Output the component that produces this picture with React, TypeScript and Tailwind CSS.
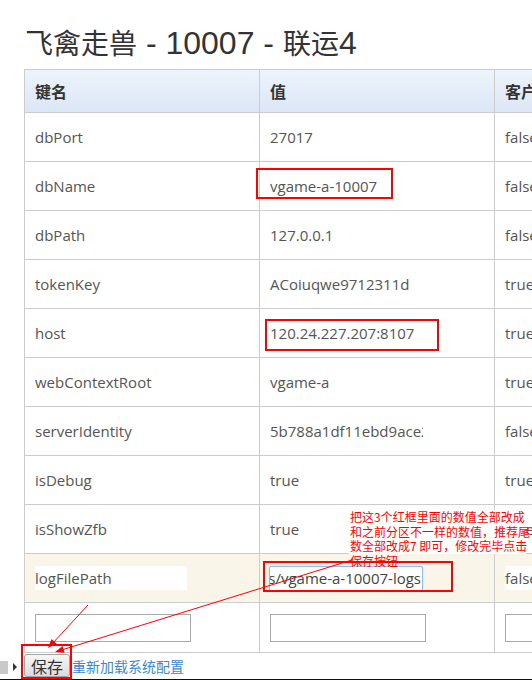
import React from "react";

const rows: [string, string, string][] = [
  ["dbPort", "27017", "false"],
  ["dbName", "vgame-a-10007", "false"],
  ["dbPath", "127.0.0.1", "false"],
  ["tokenKey", "ACoiuqwe9712311d", "true"],
  ["host", "120.24.227.207:8107", "true"],
  ["webContextRoot", "vgame-a", "true"],
  ["serverIdentity", "5b788a1df11ebd9ace2f0c", "false"],
  ["isDebug", "true", "true"],
  ["isShowZfb", "true", "true"],
];

const cellFont = "font-['Open_Sans','Noto_Sans_CJK_SC',sans-serif] text-[15px] text-[#555]";

function Cell({ children, className = "" }: { children?: React.ReactNode; className?: string }) {
  return (
    <div className={`w-[235px] shrink-0 border-r border-[#cccccc] pl-[10px] flex items-center ${className}`}>
      {children}
    </div>
  );
}

export default function App() {
  return (
    <div className="relative w-[532px] h-[680px] overflow-hidden bg-white">
      {/* Title */}
      <div className="h-[69px] pt-[24px] pl-[25px] whitespace-nowrap text-[#333] font-['Liberation_Sans','Noto_Sans_CJK_SC',sans-serif] text-[32px] leading-[36px]">
        <span className="text-[28px] font-['Noto_Sans_CJK_SC',sans-serif]">飞禽走兽</span>
        {" - 10007 - "}
        <span className="text-[28px] font-['Noto_Sans_CJK_SC',sans-serif]">联运</span>4
      </div>

      {/* Table */}
      <div className="ml-[24px] w-[706px] border-l border-t border-[#cccccc]">
        <div className="flex h-[43px] border-b border-[#cccccc] bg-linear-to-b from-[#edf4fc] to-[#dbe6f6] font-['Noto_Sans_CJK_SC',sans-serif] text-[16px] font-bold text-[#333]">
          <Cell>键名</Cell>
          <Cell>值</Cell>
          <Cell>客户端</Cell>
        </div>
        {rows.map(([k, v, c]) => (
          <div key={k} className={`flex h-[49px] border-b border-[#cccccc] ${cellFont}`}>
            <Cell>
              <div className="w-[153px] overflow-hidden whitespace-nowrap">{k}</div>
            </Cell>
            <Cell>
              <div className="w-[153px] overflow-hidden whitespace-nowrap">{v}</div>
            </Cell>
            <Cell>{c}</Cell>
          </div>
        ))}
        {/* highlighted row */}
        <div className={`flex h-[49px] border-b border-[#cccccc] bg-[#f9f6e9] ${cellFont}`}>
          <Cell>
            <div className="w-[152px] h-[24px] bg-white flex items-center whitespace-nowrap overflow-hidden">logFilePath</div>
          </Cell>
          <Cell>
            <div className="-ml-[1px] w-[154px] h-[25px] bg-white border border-[#91baee] rounded-[2px] shadow-[0_0_2px_#b8d4f5] overflow-hidden flex justify-end items-center whitespace-nowrap">
              <span className="pr-[1px] text-[#444]">/data/vgame/logs/vgame-a-10007-logs</span>
            </div>
          </Cell>
          <Cell>
            <div className="w-[152px] h-[24px] bg-white flex items-center">false</div>
          </Cell>
        </div>
        {/* empty input row */}
        <div className="flex h-[50px] border-b border-[#cccccc]">
          <Cell>
            <div className="w-[156px] h-[28px] border border-[#a9a9a9] bg-white" />
          </Cell>
          <Cell>
            <div className="w-[156px] h-[28px] border border-[#a9a9a9] bg-white" />
          </Cell>
          <Cell>
            <div className="w-[156px] h-[28px] border border-[#a9a9a9] bg-white" />
          </Cell>
        </div>
      </div>

      {/* Footer */}
      <div className="flex items-center h-[26px]">
        <div className="w-[8px] h-[13px] bg-[#c9c9c9] mt-[2px]" />
        <div className="ml-[5px] mt-[2px] w-0 h-0 border-y-[4px] border-y-transparent border-l-[4px] border-l-[#333]" />
        <button className="ml-[7px] -mt-[1px] w-[46px] h-[23px] border border-[#a3a3a3] rounded-[3px] bg-linear-to-b from-[#f7f7f7] to-[#dcdcdc] text-[16px] leading-[20px] text-[#333] font-['Noto_Sans_CJK_SC',sans-serif]">
          保存
        </button>
        <span className="ml-[2px] text-[14px] text-[#3a89cf] font-['Noto_Sans_CJK_SC',sans-serif]">重新加载系统配置</span>
      </div>
      <div className="h-[1px] bg-[#111]" />

      {/* Annotation text */}
      <div className="absolute left-[349px] top-[510px] text-[12px] leading-[14.5px] text-[#ff0000] font-['Noto_Sans_CJK_SC',sans-serif] whitespace-nowrap">
        <div className="bg-white w-[177px] pl-[1px]">
          <div>把这3个红框里面的数值全部改成</div>
          <div>和之前分区不一样的数值，推荐尾</div>
          <div>数全部改成7 即可，修改完毕点击</div>
        </div>
        <div className="pl-[1px]">保存按钮</div>
      </div>

      {/* Red boxes */}
      <div className="absolute left-[256px] top-[168px] w-[137px] h-[31px] border-2 border-[#ff0000]" />
      <div className="absolute left-[265px] top-[319px] w-[174px] h-[32px] border-2 border-[#ff0000]" />
      <div className="absolute left-[263px] top-[561px] w-[190px] h-[31px] border-2 border-[#ff0000]" />
      <div className="absolute left-[21px] top-[644px] w-[51px] h-[35px] border-2 border-[#ff0000]" />

      {/* Arrows */}
      <svg className="absolute left-0 top-0 pointer-events-none" width="532" height="680" viewBox="0 0 532 680">
        <line x1="352" y1="560" x2="60" y2="650.5" stroke="#ff0000" strokeWidth="1" />
        <polygon points="55,652 64.6,652.7 62.6,646" fill="#ff0000" />
        <line x1="88" y1="605" x2="52" y2="644" stroke="#ff0000" strokeWidth="1" />
        <polygon points="48,648 56.7,643.8 51.5,639" fill="#ff0000" />
      </svg>
    </div>
  );
}
